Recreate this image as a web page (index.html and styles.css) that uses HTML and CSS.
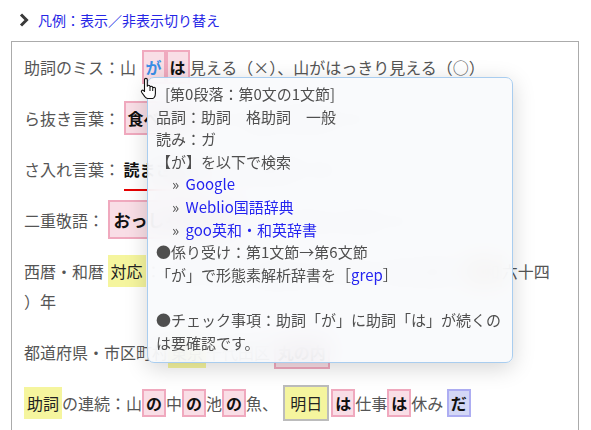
FILE: index.html
```html
<!DOCTYPE html>
<html>
<head>
    <meta charset="utf-8">
    <link rel="stylesheet" href="styles.css">
</head>
<body>
    <div class="page">
        <div class="legend-toggle">
            <svg class="chevron" width="10" height="14" viewBox="0 0 10 14"><polyline points="2,1.5 7.5,7 2,12.5" fill="none" stroke="#3a3a3a" stroke-width="3"/></svg>
            <a href="#" class="legend-link">凡例：表示／非表示切り替え</a>
        </div>

        <div class="sample">
            <p>助詞のミス：山 <span class="mark err hover">が</span><span class="mark err">は</span>見える（×）、山がはっきり見える（○）</p>
            <p>ら抜き言葉： <span class="mark err">食べれる</span>（×）、食べられる（○）</p>
            <p>さ入れ言葉： <span class="sa">読まさせて</span>いただきます（×）</p>
            <p>二重敬語： <span class="mark err big">おっしゃられる</span>（×）、おっしゃる（○）</p>
            <p>西暦・和暦 <span class="hl">対応</span>：一九二六年（昭和元年）から一九八九年（<span class="hl-orange">昭和</span>六十四<br>）年</p>
            <p>都道府県・市区町村<span class="hl">東京</span>千代田区 <span class="mark err">丸の内</span></p>
            <p><span class="hl">助詞</span>の連続：山<span class="mark err tight">の</span>中<span class="mark err tight">の</span>池<span class="mark err tight">の</span>魚、<span class="frame">明日</span><span class="mark err tight">は</span>仕事<span class="mark err tight">は</span>休み <span class="mark aux tight">だ</span></p>
        </div>

        <div class="tip">
            <div class="tip-head">[第0段落：第0文の1文節]</div>
            <div>品詞：助詞　格助詞　一般</div>
            <div>読み：ガ</div>
            <div>【が】を以下で検索</div>
            <div class="search">» <a href="#">Google</a></div>
            <div class="search">» <a href="#">Weblio国語辞典</a></div>
            <div class="search">» <a href="#">goo英和・和英辞書</a></div>
            <div>●係り受け：第1文節→第6文節</div>
            <div>「が」で形態素解析辞書を［<a href="#" class="grep">grep</a>］</div>
            <div class="blank"></div>
            <div>●チェック事項：助詞「が」に助詞「は」が続くのは要確認です。</div>
        </div>

        <svg class="cursor" width="20" height="24" viewBox="0 0 20 24">
            <path d="M4.5 2.6 C4.5 1 7.3 1 7.3 2.6 V9.2 C7.3 7.9 10 7.9 10 9.2 V10.2 C10 8.9 12.7 8.9 12.7 10.2 V11.2 C12.7 9.9 15.4 9.9 15.4 11.2 V16.5 C15.4 19.2 14 21.5 12.6 21.5 H7.6 C6.5 21.5 5.6 20.6 4.8 19.6 L1.6 15.2 C0.8 14 2.4 12.5 3.6 13.6 L4.5 14.5 Z" fill="#fff" stroke="#111" stroke-width="1.1" stroke-linejoin="round"/>
            <path d="M10 10.5 V14 M12.7 11.5 V14" stroke="#111" stroke-width="1" fill="none"/>
        </svg>
    </div>
</body>
</html>
```

FILE: styles.css
```css
html, body {
    height: 430px;
    overflow: hidden;
}

body {
    margin: 0;
    background: #fff;
    font-family: "Noto Sans CJK JP", "Noto Sans", sans-serif;
}

.page {
    position: relative;
    padding: 10px 0 0 11px;
    height: 420px;
}

.legend-toggle {
    display: flex;
    align-items: center;
    height: 20px;
    padding-left: 8px;
    gap: 9px;
}

.legend-link {
    color: #2626e6;
    font-size: 14px;
    text-decoration: none;
}

.sample {
    margin-top: 11px;
    width: 542px;
    height: 500px;
    border: 1px solid #ababab;
    padding: 10px 12px;
    color: #555;
    font-size: 16px;
}

.sample p {
    margin: 0 0 21px;
    line-height: 30px;
}

.mark {
    color: #111;
    font-weight: bold;
    padding: 3px 2px;
    border: 2px solid #f0a9be;
    background: #f9dee6;
}

.mark.big {
    padding: 5px 4px;
    font-size: 17px;
}

.mark.hover {
    color: #3a8ee6;
    margin-left: 2px;
}

.mark.tight {
    padding: 0 2px;
}

.mark.aux {
    border-color: #adadf2;
    background: #d3d7f6;
}

.sa {
    color: #111;
    font-weight: bold;
    border-bottom: 2px solid #e60000;
    padding-bottom: 8px;
}

.hl {
    color: #222;
    background: #f5f59e;
    padding: 4px 3px;
}

.hl-orange {
    background: #fbe3c6;
    padding: 4px 2px;
}

.frame {
    color: #222;
    background: #f5f59e;
    border: 2px solid #bcbcbc;
    padding: 4px 5px;
    margin: 0 2px 0 5px;
}

.tip {
    position: absolute;
    left: 147px;
    top: 77px;
    width: 348px;
    padding: 5px 8px 8px;
    border: 1px solid #a9cdef;
    border-radius: 7px;
    background: rgba(248, 249, 252, 0.9);
    backdrop-filter: blur(12px);
    box-shadow: 0 5px 22px rgba(0, 0, 0, 0.17);
    color: #4f4f4f;
    font-size: 15px;
    line-height: 22.6px;
}

.tip a {
    color: #2424f0;
    text-decoration: none;
    margin-left: 3px;
}

.tip a.grep {
    margin-left: 0;
}

.tip-head {
    padding-left: 9px;
}

.search {
    padding-left: 16px;
}

.blank {
    height: 22.6px;
}

.cursor {
    position: absolute;
    left: 140px;
    top: 77px;
}
```
